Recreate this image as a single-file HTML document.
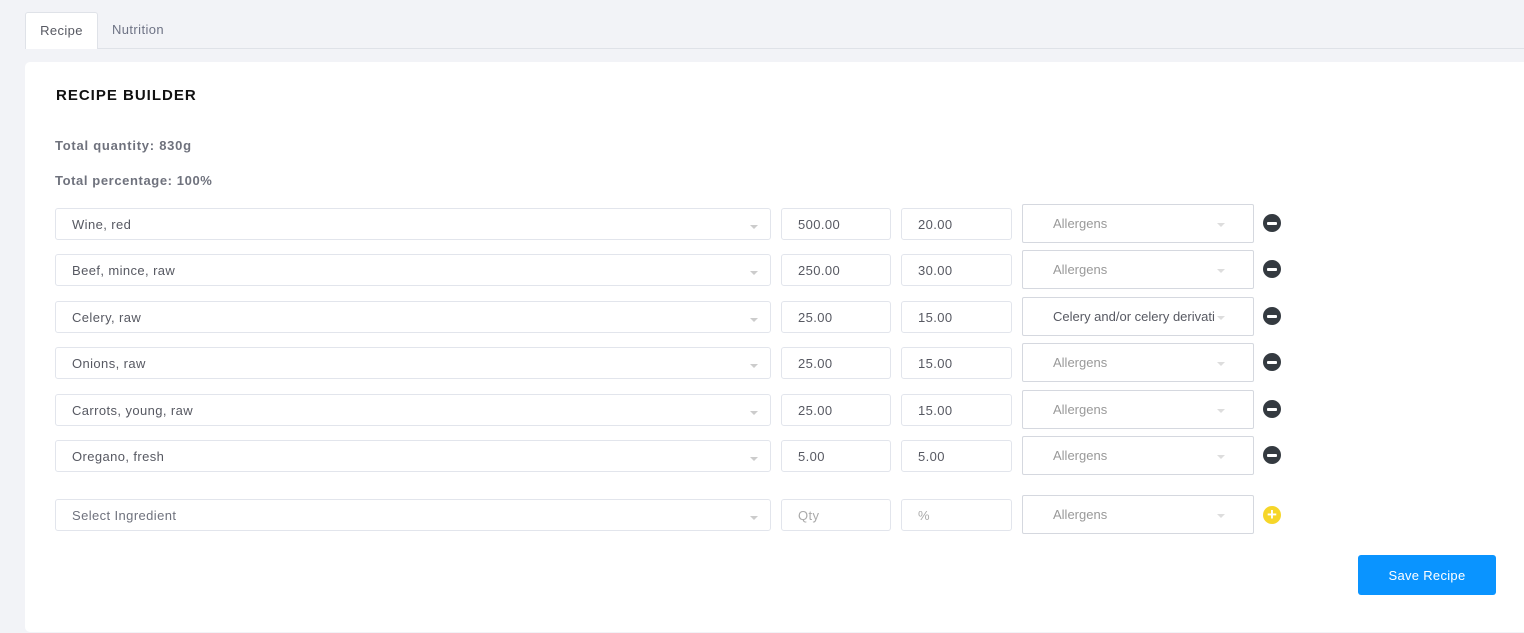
<!DOCTYPE html><html><head><style>
body{margin:0;background:#f2f3f7;font-family:"Liberation Sans",sans-serif;width:1524px;height:633px;overflow:hidden;position:relative}
.abs{position:absolute;box-sizing:border-box}
.tabline{left:25px;right:0;top:48px;height:1px;background:#dfe2e8}
.tab{top:12px;height:37px;font-size:13px;color:#6e7385;line-height:36px;letter-spacing:0.4px}
.card{left:25px;top:62px;width:1520px;height:570px;background:#fff;border-radius:5px}
.in{border:1px solid #e2e5ec;border-radius:3px;background:#fff;font-size:13px;color:#575962;padding-left:16px;height:32px;line-height:31px;letter-spacing:0.4px}
.al{border:1px solid #d5d8df;border-radius:2px;background:#fff;font-size:13px;color:#999;padding-left:30px;height:39px;line-height:38px;left:1022px;width:232px}
.car{width:0;height:0;border-left:4px solid transparent;border-right:4px solid transparent;border-top:4px solid #ccc}
.ic{left:1263px;width:18px;height:18px;border-radius:50%;background:#343a40}
.ic:after{content:"";position:absolute;left:4px;top:7.5px;width:10px;height:3px;background:#fff;border-radius:1px}
</style></head><body>
<div class="abs tabline"></div>
<div class="abs tab" style="left:25px;width:73px;background:#fff;border:1px solid #dfe2e8;border-bottom:none;border-radius:3px 3px 0 0;text-align:center;color:#575962">Recipe</div>
<div class="abs tab" style="left:112px">Nutrition</div>
<div class="abs card"></div>
<div class="abs" style="left:56px;top:87px;font-size:15px;font-weight:bold;color:#111;letter-spacing:1px">RECIPE BUILDER</div>
<div class="abs" style="left:55px;top:138px;font-size:13px;font-weight:bold;color:#6f727d;letter-spacing:0.75px">Total quantity: 830g</div>
<div class="abs" style="left:55px;top:173px;font-size:13px;font-weight:bold;color:#6f727d;letter-spacing:0.6px">Total percentage: 100%</div>
<div id="rows"></div>
<div class="abs" style="left:1358px;top:555px;width:138px;height:40px;background:#0a94ff;border-radius:3px;color:#fff;font-size:13px;text-align:center;line-height:42px;letter-spacing:0.3px">Save Recipe</div>
<script>
var d=[["Wine, red","500.00","20.00","Allergens",224],["Beef, mince, raw","250.00","30.00","Allergens",270],["Celery, raw","25.00","15.00","Celery and/or celery derivati",317],["Onions, raw","25.00","15.00","Allergens",363],["Carrots, young, raw","25.00","15.00","Allergens",410],["Oregano, fresh","5.00","5.00","Allergens",456],["Select Ingredient","Qty","%","Allergens",515]];
var h="";d.forEach(function(r,i){var c=r[4],last=i==6,ph=last?"color:#aaa;":"";
h+='<div class="abs in" style="left:55px;top:'+(c-16)+'px;width:716px;'+(last?"color:#6f727d":"")+'">'+r[0]+'</div>';
h+='<div class="abs car" style="left:750px;top:'+(c+1)+'px"></div>';
h+='<div class="abs in" style="left:781px;top:'+(c-16)+'px;width:110px;'+ph+'">'+r[1]+'</div>';
h+='<div class="abs in" style="left:901px;top:'+(c-16)+'px;width:111px;'+ph+'">'+r[2]+'</div>';
h+='<div class="abs al" style="top:'+(c-20)+'px;'+(r[3]!="Allergens"?"color:#575962":"")+'">'+r[3]+'</div>';
h+='<div class="abs car" style="left:1217px;top:'+(c-1)+'px;border-top-color:#ddd"></div>';
if(last)h+='<div class="abs" style="left:1263px;top:'+(c-9)+'px;width:18px;height:18px;border-radius:50%;background:#f6d629;color:#fff;font-weight:bold;font-size:17px;line-height:18px;text-align:center">+</div>';
else h+='<div class="abs ic" style="top:'+(c-10)+'px"></div>';});
document.getElementById("rows").innerHTML=h;
</script>
</body></html>
